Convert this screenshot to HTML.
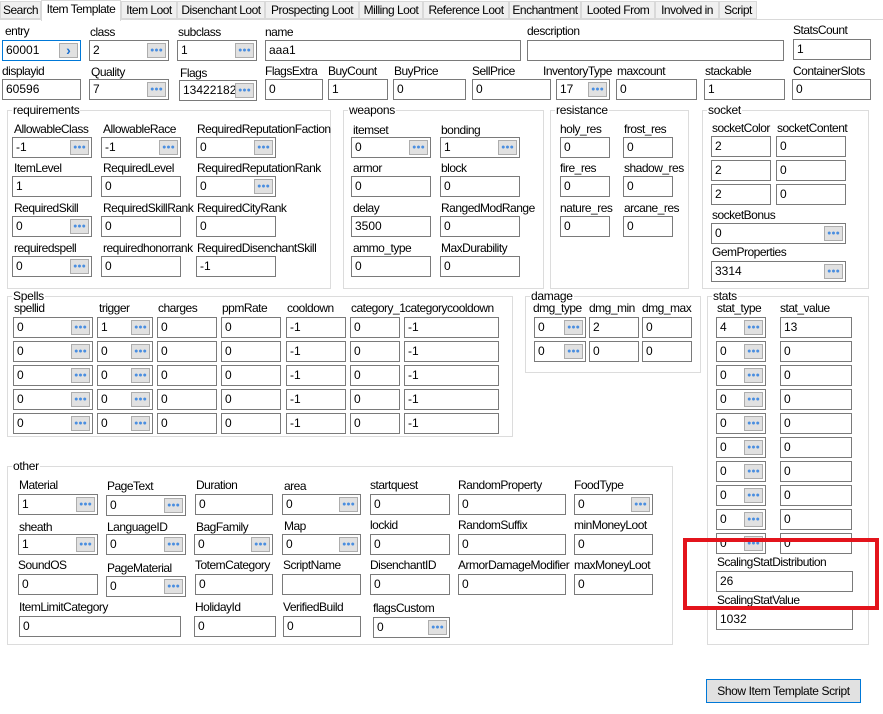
<!DOCTYPE html>
<html><head><meta charset="utf-8"><style>
*{box-sizing:border-box}
body{margin:0;width:883px;height:714px;background:#fff;position:relative;overflow:hidden;font-family:"Liberation Sans",sans-serif;font-size:12px;color:#000}
.l{position:absolute;white-space:nowrap;line-height:14px;letter-spacing:-0.5px}
.t{position:absolute;height:21px;border:1px solid #7a7a7a;padding-left:3px;line-height:19px;background:#fff;white-space:nowrap;overflow:hidden}
.b{position:absolute;right:2px;top:2px;width:19px;height:15px;background:#e1e1e1;border:1px solid #adadad;color:#4a8ee0;font-size:7px;line-height:13px;text-align:center;letter-spacing:0}
.g{position:absolute;border:1px solid #dcdcdc}
.g>span{position:absolute;left:4px;top:-8px;background:#fff;padding:0 1px;line-height:14px;letter-spacing:-0.3px}
.tab{position:absolute;top:1px;height:18px;background:#f0f0f0;border:1px solid #d9d9d9;line-height:16px;text-align:center;white-space:nowrap;letter-spacing:-0.5px}
</style></head><body>
<div style="position:absolute;left:0;top:19px;width:883px;height:1px;background:#d9d9d9"></div>
<div class="tab" style="left:0;width:41px">Search</div>
<div class="tab" style="left:41px;width:80px;top:0;height:21px;background:#fff;border-bottom:none">Item Template</div>
<div class="tab" style="left:121px;width:56px">Item Loot</div>
<div class="tab" style="left:177px;width:88px">Disenchant Loot</div>
<div class="tab" style="left:265px;width:94px">Prospecting Loot</div>
<div class="tab" style="left:359px;width:64px">Milling Loot</div>
<div class="tab" style="left:423px;width:86px">Reference Loot</div>
<div class="tab" style="left:509px;width:72px">Enchantment</div>
<div class="tab" style="left:581px;width:74px">Looted From</div>
<div class="tab" style="left:655px;width:64px">Involved in</div>
<div class="tab" style="left:719px;width:38px">Script</div>

<div class="l" style="left:5px;top:24px">entry</div>
<div class="l" style="left:90px;top:25px">class</div>
<div class="l" style="left:178px;top:25px">subclass</div>
<div class="l" style="left:265px;top:25px">name</div>
<div class="l" style="left:527px;top:24px">description</div>
<div class="l" style="left:793px;top:23px">StatsCount</div>
<div class="t" style="left:2px;top:40px;width:79px;border-color:#0078d7">60001<div class="b" style="color:#1a6fd0;font-size:14px;font-weight:bold;line-height:13px">›</div></div>
<div class="t" style="left:89px;top:40px;width:80px">2<div class="b">●●●</div></div>
<div class="t" style="left:177px;top:40px;width:80px">1<div class="b">●●●</div></div>
<div class="t" style="left:265px;top:40px;width:256px">aaa1</div>
<div class="t" style="left:527px;top:40px;width:257px"></div>
<div class="t" style="left:793px;top:39px;width:78px">1</div>

<div class="l" style="left:2px;top:64px">displayid</div>
<div class="l" style="left:91px;top:65px">Quality</div>
<div class="l" style="left:180px;top:66px">Flags</div>
<div class="l" style="left:265px;top:64px">FlagsExtra</div>
<div class="l" style="left:328px;top:64px">BuyCount</div>
<div class="l" style="left:394px;top:64px">BuyPrice</div>
<div class="l" style="left:472px;top:64px">SellPrice</div>
<div class="l" style="left:543px;top:64px">InventoryType</div>
<div class="l" style="left:617px;top:64px">maxcount</div>
<div class="l" style="left:705px;top:64px">stackable</div>
<div class="l" style="left:793px;top:64px">ContainerSlots</div>
<div class="t" style="left:2px;top:79px;width:79px">60596</div>
<div class="t" style="left:89px;top:79px;width:80px">7<div class="b">●●●</div></div>
<div class="t" style="left:179px;top:80px;width:78px">13422182<div class="b">●●●</div></div>
<div class="t" style="left:265px;top:79px;width:58px">0</div>
<div class="t" style="left:328px;top:79px;width:60px">1</div>
<div class="t" style="left:393px;top:79px;width:73px">0</div>
<div class="t" style="left:472px;top:79px;width:79px">0</div>
<div class="t" style="left:556px;top:79px;width:54px">17<div class="b">●●●</div></div>
<div class="t" style="left:616px;top:79px;width:81px">0</div>
<div class="t" style="left:704px;top:79px;width:81px">1</div>
<div class="t" style="left:792px;top:79px;width:79px">0</div>

<div class="g" style="left:7px;top:110px;width:324px;height:179px"><span>requirements</span></div>
<div class="l" style="left:14px;top:122px">AllowableClass</div>
<div class="l" style="left:103px;top:122px">AllowableRace</div>
<div class="l" style="left:197px;top:122px">RequiredReputationFaction</div>
<div class="t" style="left:12px;top:137px;width:80px">-1<div class="b">●●●</div></div>
<div class="t" style="left:101px;top:137px;width:80px">-1<div class="b">●●●</div></div>
<div class="t" style="left:196px;top:137px;width:80px">0<div class="b">●●●</div></div>
<div class="l" style="left:14px;top:161px">ItemLevel</div>
<div class="l" style="left:103px;top:161px">RequiredLevel</div>
<div class="l" style="left:197px;top:161px">RequiredReputationRank</div>
<div class="t" style="left:12px;top:176px;width:80px">1</div>
<div class="t" style="left:101px;top:176px;width:80px">0</div>
<div class="t" style="left:196px;top:176px;width:80px">0<div class="b">●●●</div></div>
<div class="l" style="left:14px;top:201px">RequiredSkill</div>
<div class="l" style="left:103px;top:201px">RequiredSkillRank</div>
<div class="l" style="left:197px;top:201px">RequiredCityRank</div>
<div class="t" style="left:12px;top:216px;width:80px">0<div class="b">●●●</div></div>
<div class="t" style="left:101px;top:216px;width:80px">0</div>
<div class="t" style="left:196px;top:216px;width:80px">0</div>
<div class="l" style="left:14px;top:241px">requiredspell</div>
<div class="l" style="left:103px;top:241px">requiredhonorrank</div>
<div class="l" style="left:197px;top:241px">RequiredDisenchantSkill</div>
<div class="t" style="left:12px;top:256px;width:80px">0<div class="b">●●●</div></div>
<div class="t" style="left:101px;top:256px;width:80px">0</div>
<div class="t" style="left:196px;top:256px;width:80px">-1</div>

<div class="g" style="left:343px;top:110px;width:201px;height:179px"><span>weapons</span></div>
<div class="l" style="left:353px;top:123px">itemset</div>
<div class="l" style="left:441px;top:123px">bonding</div>
<div class="t" style="left:351px;top:137px;width:80px">0<div class="b">●●●</div></div>
<div class="t" style="left:440px;top:137px;width:80px">1<div class="b">●●●</div></div>
<div class="l" style="left:353px;top:161px">armor</div>
<div class="l" style="left:441px;top:161px">block</div>
<div class="t" style="left:351px;top:176px;width:80px">0</div>
<div class="t" style="left:440px;top:176px;width:80px">0</div>
<div class="l" style="left:353px;top:201px">delay</div>
<div class="l" style="left:441px;top:201px">RangedModRange</div>
<div class="t" style="left:351px;top:216px;width:80px">3500</div>
<div class="t" style="left:440px;top:216px;width:80px">0</div>
<div class="l" style="left:353px;top:241px">ammo_type</div>
<div class="l" style="left:441px;top:241px">MaxDurability</div>
<div class="t" style="left:351px;top:256px;width:80px">0</div>
<div class="t" style="left:440px;top:256px;width:80px">0</div>

<div class="g" style="left:550px;top:110px;width:139px;height:179px"><span>resistance</span></div>
<div class="l" style="left:560px;top:122px">holy_res</div>
<div class="l" style="left:624px;top:122px">frost_res</div>
<div class="t" style="left:560px;top:137px;width:50px">0</div>
<div class="t" style="left:623px;top:137px;width:50px">0</div>
<div class="l" style="left:560px;top:161px">fire_res</div>
<div class="l" style="left:624px;top:161px">shadow_res</div>
<div class="t" style="left:560px;top:176px;width:50px">0</div>
<div class="t" style="left:623px;top:176px;width:50px">0</div>
<div class="l" style="left:560px;top:201px">nature_res</div>
<div class="l" style="left:624px;top:201px">arcane_res</div>
<div class="t" style="left:560px;top:216px;width:50px">0</div>
<div class="t" style="left:623px;top:216px;width:50px">0</div>

<div class="g" style="left:702px;top:110px;width:167px;height:179px"><span>socket</span></div>
<div class="l" style="left:712px;top:121px">socketColor</div>
<div class="l" style="left:777px;top:121px">socketContent</div>
<div class="t" style="left:711px;top:136px;width:60px">2</div>
<div class="t" style="left:776px;top:136px;width:70px">0</div>
<div class="t" style="left:711px;top:160px;width:60px">2</div>
<div class="t" style="left:776px;top:160px;width:70px">0</div>
<div class="t" style="left:711px;top:184px;width:60px">2</div>
<div class="t" style="left:776px;top:184px;width:70px">0</div>
<div class="l" style="left:712px;top:208px">socketBonus</div>
<div class="t" style="left:711px;top:223px;width:135px">0<div class="b">●●●</div></div>
<div class="l" style="left:712px;top:245px">GemProperties</div>
<div class="t" style="left:711px;top:261px;width:135px">3314<div class="b">●●●</div></div>

<div class="g" style="left:7px;top:296px;width:506px;height:141px"><span>Spells</span></div>
<div class="l" style="left:14px;top:301px">spellid</div>
<div class="l" style="left:99px;top:301px">trigger</div>
<div class="l" style="left:158px;top:301px">charges</div>
<div class="l" style="left:222px;top:301px">ppmRate</div>
<div class="l" style="left:287px;top:301px">cooldown</div>
<div class="l" style="left:351px;top:301px">category_1</div>
<div class="l" style="left:405px;top:301px">categorycooldown</div>

<div class="t" style="left:13px;top:317px;width:80px">0<div class="b">●●●</div></div><div class="t" style="left:97px;top:317px;width:56px">1<div class="b">●●●</div></div><div class="t" style="left:157px;top:317px;width:60px">0</div><div class="t" style="left:221px;top:317px;width:60px">0</div><div class="t" style="left:286px;top:317px;width:60px">-1</div><div class="t" style="left:350px;top:317px;width:50px">0</div><div class="t" style="left:404px;top:317px;width:95px">-1</div>
<div class="t" style="left:13px;top:341px;width:80px">0<div class="b">●●●</div></div><div class="t" style="left:97px;top:341px;width:56px">0<div class="b">●●●</div></div><div class="t" style="left:157px;top:341px;width:60px">0</div><div class="t" style="left:221px;top:341px;width:60px">0</div><div class="t" style="left:286px;top:341px;width:60px">-1</div><div class="t" style="left:350px;top:341px;width:50px">0</div><div class="t" style="left:404px;top:341px;width:95px">-1</div>
<div class="t" style="left:13px;top:365px;width:80px">0<div class="b">●●●</div></div><div class="t" style="left:97px;top:365px;width:56px">0<div class="b">●●●</div></div><div class="t" style="left:157px;top:365px;width:60px">0</div><div class="t" style="left:221px;top:365px;width:60px">0</div><div class="t" style="left:286px;top:365px;width:60px">-1</div><div class="t" style="left:350px;top:365px;width:50px">0</div><div class="t" style="left:404px;top:365px;width:95px">-1</div>
<div class="t" style="left:13px;top:389px;width:80px">0<div class="b">●●●</div></div><div class="t" style="left:97px;top:389px;width:56px">0<div class="b">●●●</div></div><div class="t" style="left:157px;top:389px;width:60px">0</div><div class="t" style="left:221px;top:389px;width:60px">0</div><div class="t" style="left:286px;top:389px;width:60px">-1</div><div class="t" style="left:350px;top:389px;width:50px">0</div><div class="t" style="left:404px;top:389px;width:95px">-1</div>
<div class="t" style="left:13px;top:413px;width:80px">0<div class="b">●●●</div></div><div class="t" style="left:97px;top:413px;width:56px">0<div class="b">●●●</div></div><div class="t" style="left:157px;top:413px;width:60px">0</div><div class="t" style="left:221px;top:413px;width:60px">0</div><div class="t" style="left:286px;top:413px;width:60px">-1</div><div class="t" style="left:350px;top:413px;width:50px">0</div><div class="t" style="left:404px;top:413px;width:95px">-1</div>

<div class="g" style="left:525px;top:296px;width:176px;height:77px"><span>damage</span></div>
<div class="l" style="left:533px;top:301px">dmg_type</div>
<div class="l" style="left:589px;top:301px">dmg_min</div>
<div class="l" style="left:642px;top:301px">dmg_max</div>
<div class="t" style="left:534px;top:317px;width:52px">0<div class="b">●●●</div></div>
<div class="t" style="left:589px;top:317px;width:50px">2</div>
<div class="t" style="left:642px;top:317px;width:50px">0</div>
<div class="t" style="left:534px;top:341px;width:52px">0<div class="b">●●●</div></div>
<div class="t" style="left:589px;top:341px;width:50px">0</div>
<div class="t" style="left:642px;top:341px;width:50px">0</div>

<div class="g" style="left:707px;top:296px;width:162px;height:349px"><span>stats</span></div>
<div class="l" style="left:717px;top:301px">stat_type</div>
<div class="l" style="left:780px;top:301px">stat_value</div>
<div class="t" style="left:716px;top:317px;width:50px">4<div class="b">●●●</div></div><div class="t" style="left:780px;top:317px;width:72px">13</div>
<div class="t" style="left:716px;top:341px;width:50px">0<div class="b">●●●</div></div><div class="t" style="left:780px;top:341px;width:72px">0</div>
<div class="t" style="left:716px;top:365px;width:50px">0<div class="b">●●●</div></div><div class="t" style="left:780px;top:365px;width:72px">0</div>
<div class="t" style="left:716px;top:389px;width:50px">0<div class="b">●●●</div></div><div class="t" style="left:780px;top:389px;width:72px">0</div>
<div class="t" style="left:716px;top:413px;width:50px">0<div class="b">●●●</div></div><div class="t" style="left:780px;top:413px;width:72px">0</div>
<div class="t" style="left:716px;top:437px;width:50px">0<div class="b">●●●</div></div><div class="t" style="left:780px;top:437px;width:72px">0</div>
<div class="t" style="left:716px;top:461px;width:50px">0<div class="b">●●●</div></div><div class="t" style="left:780px;top:461px;width:72px">0</div>
<div class="t" style="left:716px;top:485px;width:50px">0<div class="b">●●●</div></div><div class="t" style="left:780px;top:485px;width:72px">0</div>
<div class="t" style="left:716px;top:509px;width:50px">0<div class="b">●●●</div></div><div class="t" style="left:780px;top:509px;width:72px">0</div>
<div class="t" style="left:716px;top:533px;width:50px">0<div class="b">●●●</div></div><div class="t" style="left:780px;top:533px;width:72px">0</div>
<div class="l" style="left:717px;top:555px;background:#fff">ScalingStatDistribution</div>
<div class="t" style="left:716px;top:571px;width:137px">26</div>
<div class="l" style="left:717px;top:593px">ScalingStatValue</div>
<div class="t" style="left:716px;top:609px;width:137px">1032</div>
<div style="position:absolute;left:683px;top:538px;width:196px;height:72px;border:4px solid #e3141c"></div>

<div class="g" style="left:7px;top:466px;width:666px;height:179px"><span>other</span></div>
<div class="l" style="left:19px;top:478px">Material</div>
<div class="l" style="left:107px;top:479px">PageText</div>
<div class="l" style="left:196px;top:478px">Duration</div>
<div class="l" style="left:284px;top:479px">area</div>
<div class="l" style="left:370px;top:478px">startquest</div>
<div class="l" style="left:458px;top:478px">RandomProperty</div>
<div class="l" style="left:574px;top:478px">FoodType</div>
<div class="t" style="left:18px;top:494px;width:80px">1<div class="b">●●●</div></div>
<div class="t" style="left:106px;top:495px;width:80px">0<div class="b">●●●</div></div>
<div class="t" style="left:195px;top:494px;width:78px">0</div>
<div class="t" style="left:282px;top:494px;width:79px">0<div class="b">●●●</div></div>
<div class="t" style="left:370px;top:494px;width:80px">0</div>
<div class="t" style="left:458px;top:494px;width:108px">0</div>
<div class="t" style="left:574px;top:494px;width:79px">0<div class="b">●●●</div></div>
<div class="l" style="left:19px;top:520px">sheath</div>
<div class="l" style="left:107px;top:520px">LanguageID</div>
<div class="l" style="left:196px;top:520px">BagFamily</div>
<div class="l" style="left:284px;top:519px">Map</div>
<div class="l" style="left:370px;top:518px">lockid</div>
<div class="l" style="left:458px;top:518px">RandomSuffix</div>
<div class="l" style="left:574px;top:518px">minMoneyLoot</div>
<div class="t" style="left:18px;top:534px;width:80px">1<div class="b">●●●</div></div>
<div class="t" style="left:106px;top:534px;width:80px">0<div class="b">●●●</div></div>
<div class="t" style="left:194px;top:534px;width:79px">0<div class="b">●●●</div></div>
<div class="t" style="left:282px;top:534px;width:79px">0<div class="b">●●●</div></div>
<div class="t" style="left:370px;top:534px;width:80px">0</div>
<div class="t" style="left:458px;top:534px;width:108px">0</div>
<div class="t" style="left:574px;top:534px;width:79px">0</div>
<div class="l" style="left:18px;top:558px">SoundOS</div>
<div class="l" style="left:107px;top:561px">PageMaterial</div>
<div class="l" style="left:195px;top:558px">TotemCategory</div>
<div class="l" style="left:283px;top:558px">ScriptName</div>
<div class="l" style="left:370px;top:558px">DisenchantID</div>
<div class="l" style="left:458px;top:558px">ArmorDamageModifier</div>
<div class="l" style="left:574px;top:558px">maxMoneyLoot</div>
<div class="t" style="left:18px;top:574px;width:80px">0</div>
<div class="t" style="left:106px;top:576px;width:80px">0<div class="b">●●●</div></div>
<div class="t" style="left:195px;top:574px;width:78px">0</div>
<div class="t" style="left:282px;top:574px;width:79px"></div>
<div class="t" style="left:370px;top:574px;width:80px">0</div>
<div class="t" style="left:458px;top:574px;width:108px">0</div>
<div class="t" style="left:574px;top:574px;width:79px">0</div>
<div class="l" style="left:19px;top:600px">ItemLimitCategory</div>
<div class="l" style="left:195px;top:600px">HolidayId</div>
<div class="l" style="left:283px;top:600px">VerifiedBuild</div>
<div class="l" style="left:373px;top:601px">flagsCustom</div>
<div class="t" style="left:19px;top:616px;width:162px">0</div>
<div class="t" style="left:194px;top:616px;width:82px">0</div>
<div class="t" style="left:283px;top:616px;width:78px">0</div>
<div class="t" style="left:373px;top:617px;width:77px">0<div class="b">●●●</div></div>

<div style="position:absolute;left:706px;top:679px;width:155px;height:24px;background:#e1e1e1;border:1px solid #0078d7;text-align:center;line-height:22px;letter-spacing:-0.4px">Show Item Template Script</div>
</body></html>
